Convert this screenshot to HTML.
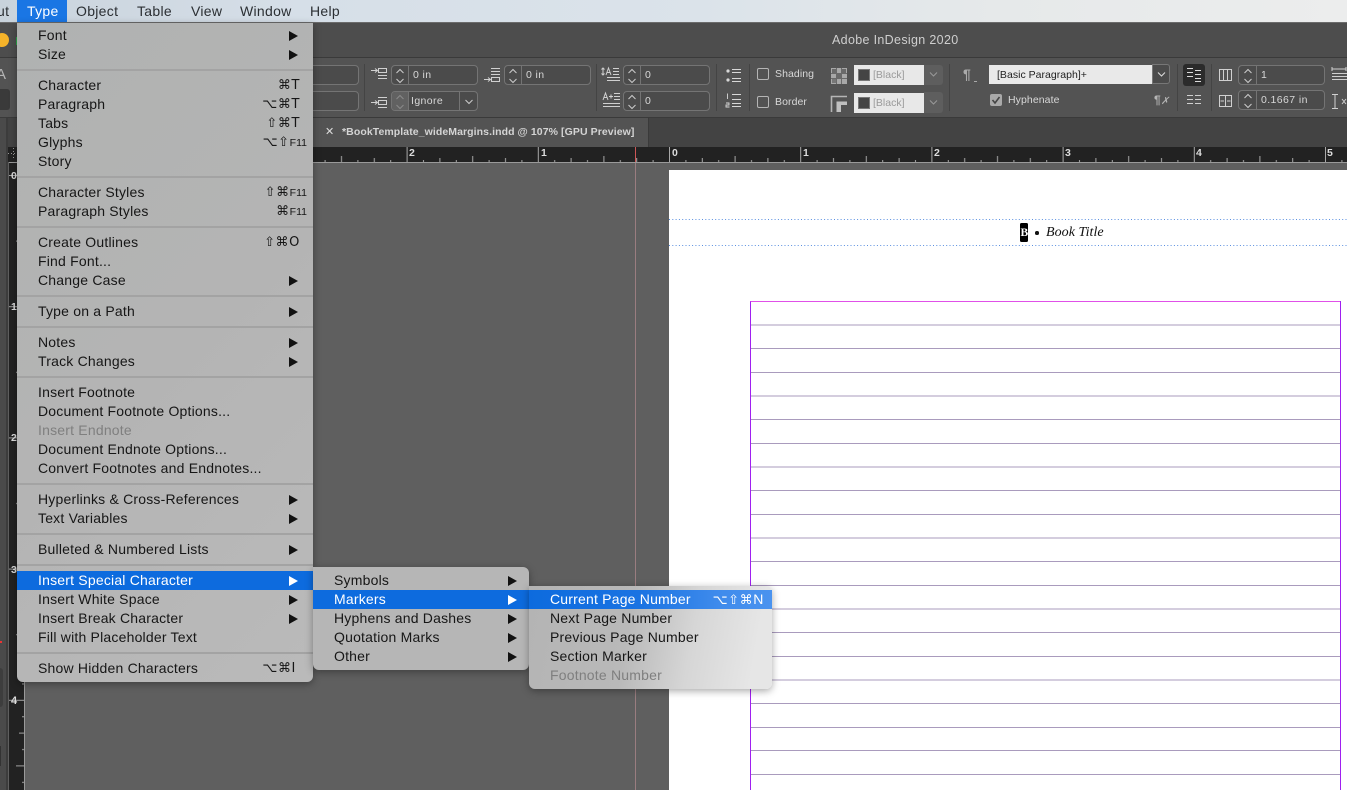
<!DOCTYPE html>
<html><head><meta charset="utf-8">
<style>
html,body{margin:0;padding:0}
body{width:1347px;height:790px;overflow:hidden;position:relative;background:#5f5f5f;font-family:"Liberation Sans",sans-serif}
.a{position:absolute}
.t{position:absolute;white-space:nowrap;line-height:16px}
/* top menu */
#bar{left:0;top:0;width:1347px;height:22px;background:linear-gradient(90deg,#c9d3dc 0,#d6dfe8 300px,#dbe3ea 700px,#e6e9ea 1000px,#eceded 1347px);border-bottom:1px solid #6b6b6b}
#bar .t{top:3px;font-size:14px;color:#2b2f33;letter-spacing:.3px}
/* toolbar */
.f{position:absolute;box-sizing:border-box;border:1px solid #747474;border-radius:4px;background:#4b4b4b;height:20px}
.f .d{position:absolute;left:16px;top:0;bottom:0;width:1px;background:#747474}
.f span{position:absolute;left:21px;top:2px;font-size:10.5px;line-height:14px;color:#d8d8d8;letter-spacing:.4px;white-space:nowrap}
.f svg{position:absolute;left:3px;top:2px}
.sep{position:absolute;width:1px;background:#444;top:64px;height:47px}
.lb{position:absolute;font-size:10.5px;color:#d8d8d8;line-height:14px;letter-spacing:.08px;white-space:nowrap}
.cb{position:absolute;box-sizing:border-box;width:12px;height:12px;border:1px solid #b5b5b5;border-radius:2px}
.rl{position:absolute;font-size:10.5px;font-weight:bold;color:#ddd;line-height:12px}
/* menus */
.m{position:absolute;box-shadow:0 2px 8px rgba(0,0,0,.35);color:#161616}
.m .i{position:absolute;left:0;right:0;height:19px;line-height:19px;font-size:14px;letter-spacing:.2px;white-space:nowrap;margin-top:1px}
.m .i b{font-weight:normal;position:absolute;left:21px;top:0}
.m .i u{text-decoration:none;position:absolute;top:0;right:13px;font-family:"DejaVu Sans",sans-serif;font-size:13px;letter-spacing:.6px;line-height:19px}
.m .i u small{font-family:"Liberation Sans",sans-serif;font-size:10.5px;letter-spacing:0}
.m .i i{position:absolute;right:15px;top:4.5px;width:0;height:0;border-left:9px solid #111;border-top:5px solid transparent;border-bottom:5px solid transparent}
.m .on{background:#0d6bde;color:#fff}
.m .on i{border-left-color:#fff}
.m .dis{color:#7f7f7f}
.m .s{position:absolute;left:0;right:0;height:2px;background:#a3a3a3}
</style></head><body>

<!-- app chrome -->
<div class="a" style="left:0;top:23px;width:1347px;height:35px;background:#4d4d4d"></div>
<div class="t" style="left:832px;top:32px;font-size:12.5px;color:#cfcfcf;letter-spacing:.33px">Adobe InDesign 2020</div>
<div class="a" style="left:-5px;top:33px;width:14px;height:14px;border-radius:50%;background:#f5b32a"></div>
<div class="a" style="left:16px;top:37px;width:6px;height:8px;background:#2ea84a"></div>
<div class="a" style="left:0;top:57px;width:1347px;height:1px;background:#3a3a3a"></div>
<div class="a" style="left:0;top:58px;width:1347px;height:59px;background:#535353"></div>
<div class="a" style="left:0;top:117px;width:1347px;height:1px;background:#3a3a3a"></div>
<div class="a" style="left:0;top:118px;width:1347px;height:29px;background:#434343"></div>
<div class="a" style="left:310px;top:118px;width:338px;height:29px;background:#535353;border-right:1px solid #3a3a3a"></div>
<div class="t" style="left:325px;top:124px;font-size:11px;color:#ddd">✕</div>
<div class="t" style="left:342px;top:124px;font-size:10.5px;font-weight:bold;color:#d4d4d4;letter-spacing:.08px">*BookTemplate_wideMargins.indd @ 107% [GPU Preview]</div>

<!-- left edge -->
<div class="a" style="left:0;top:118px;width:8px;height:672px;background:#4a4a4a"></div>
<div class="a" style="left:6px;top:118px;width:2px;height:672px;background:#3c3c3c"></div>
<div class="t" style="left:-4px;top:67px;font-size:15px;color:#b5b5b5">A</div>
<div class="a" style="left:-4px;top:89px;width:14px;height:21px;background:#3a3a3a;border-radius:3px"></div>
<div class="a" style="left:0;top:668px;width:3px;height:39px;background:#3d3d3d;border-radius:0 3px 3px 0"></div>
<div class="a" style="left:0;top:746px;width:1px;height:20px;background:#333"></div>
<div class="a" style="left:0;top:641px;width:2px;height:2px;background:#e33"></div>

<!-- rulers and page -->
<svg class="a" style="left:0;top:147px" width="1347" height="643" viewBox="0 147 1347 643">
<defs>
<pattern id="hr" patternUnits="userSpaceOnUse" x="669" y="147" width="131.2" height="15">
<path d="M.5 0V15M16.9 13V15M33.3 11V15M49.7 13V15M66.1 9V15M82.5 13V15M98.9 11V15M115.3 13V15" stroke="#a8a8a8" stroke-width="1" fill="none"/>
</pattern>
<pattern id="vr" patternUnits="userSpaceOnUse" x="8" y="175" width="16" height="131.2">
<path d="M0 .5H16M14 16.9H16M11 33.3H16M14 49.7H16M8 66.1H16M14 82.5H16M11 98.9H16M14 115.3H16" stroke="#a0a0a0" stroke-width="1" fill="none"/>
</pattern>
</defs>
<rect x="8" y="147" width="1339" height="15" fill="#222"/>
<rect x="25" y="147" width="1322" height="15" fill="url(#hr)"/>
<path d="M13.5 148V160M8 153.5H24" stroke="#999" stroke-dasharray="1 2" fill="none"/>
<rect x="9" y="162" width="16" height="1" fill="#9a9a9a"/>
<rect x="25" y="162" width="1322" height="1" fill="#9a9a9a"/>
<rect x="9" y="163" width="15" height="627" fill="#222"/>
<rect x="9" y="163" width="15" height="627" fill="url(#vr)"/>
<rect x="24" y="163" width="1" height="627" fill="#9a9a9a"/>
<rect x="25" y="163" width="1322" height="627" fill="#5f5f5f"/>
<rect x="635" y="163" width="1" height="627" fill="#9a7d80"/>
<rect x="635" y="147" width="1" height="15" fill="#c55"/>
<rect x="669" y="170" width="678" height="620" fill="#fff"/>
<path d="M669 219.5H1347M669 245.5H1347" stroke="#5a8fe0" stroke-width="1" stroke-dasharray="1 2.3" fill="none"/>
<path d="M750.5 325H1340M750.5 348.5H1340M750.5 372.5H1340M750.5 396H1340M750.5 419.5H1340M750.5 443.5H1340M750.5 467H1340M750.5 490.5H1340M750.5 514.5H1340M750.5 538H1340M750.5 561.5H1340M750.5 585.5H1340M750.5 609H1340M750.5 632.5H1340M750.5 656.5H1340M750.5 680H1340M750.5 703.5H1340M750.5 727.5H1340M750.5 750.5H1340M750.5 774.5H1340" stroke="#a99bbd" stroke-width="1" fill="none"/>
<path d="M750.5 790V301.5H1340.5V790" stroke="#a020f0" stroke-width="1" fill="none"/>
<path d="M750.5 301.5H1340" stroke="#e050e8" stroke-width="1" fill="none"/>
<rect x="1020" y="223" width="8" height="19" rx="1.5" fill="#000"/>
</svg>
<div class="t" style="left:1020.5px;top:225px;font:bold 11.5px/16px 'Liberation Serif',serif;color:#fff">B</div>
<div class="a" style="left:1035px;top:231px;width:3.5px;height:3.5px;border-radius:50%;background:#111"></div>
<div class="t" style="left:1046px;top:225px;font:italic 14px/16px 'Liberation Serif',serif;color:#111;letter-spacing:.05px">Book Title</div>

<div class="rl" style="left:409px;top:147px">2</div>
<div class="rl" style="left:541px;top:147px">1</div>
<div class="rl" style="left:672px;top:147px">0</div>
<div class="rl" style="left:803px;top:147px">1</div>
<div class="rl" style="left:934px;top:147px">2</div>
<div class="rl" style="left:1065px;top:147px">3</div>
<div class="rl" style="left:1196px;top:147px">4</div>
<div class="rl" style="left:1327px;top:147px">5</div>
<div class="rl" style="left:11px;top:170px">0</div>
<div class="rl" style="left:11px;top:301px">1</div>
<div class="rl" style="left:11px;top:432px">2</div>
<div class="rl" style="left:11px;top:564px">3</div>
<div class="rl" style="left:11px;top:695px;font-size:11px">4</div>

<!-- toolbar controls -->
<div class="f" style="left:300px;top:65px;width:59px"></div>
<div class="f" style="left:300px;top:91px;width:59px"></div>
<div class="sep" style="left:364px"></div><div class="sep" style="left:596px"></div><div class="sep" style="left:716px"></div><div class="sep" style="left:749px"></div><div class="sep" style="left:949px"></div><div class="sep" style="left:1177px"></div><div class="sep" style="left:1211px"></div>

<svg class="a" style="left:0;top:0" width="1347" height="120" fill="none" stroke="#d0d0d0" stroke-width="1">
<!-- indent icons -->
<path d="M371 70.5H377M375 68.5L377.5 70.5L375 72.5M378.5 68.5H386.5V72.5H378.5ZM378 75.5H387M378 78.5H387"/>
<path d="M484 79.5H490M488 77.5L490.5 79.5L488 81.5M491.5 77.5H499.5V81.5H491.5ZM491 74.5H500M491 71.5H500M491 68.5H500"/>
<path d="M371 102.5H377M375 100.5L377.5 102.5L375 104.5M378.5 100.5H386.5V104.5H378.5ZM378 97.5H387M378 107.5H387"/>
<!-- leading icons -->
<path d="M603 68V75M601.5 69.5L603 68L604.5 69.5M601.5 73.5L603 75L604.5 73.5M606 75L608.5 68L611 75M607 72.5H610M613 68.5H619M613 71.5H619M613 74.5H619M607 77.5H620M607 80.5H620"/>
<path d="M603 100L605.5 93L608 100M604 97.5H607M609 96.5H613M611 94.5V98.5M614 93.5H620M614 96.5H620M614 99.5H620M603 103.5H620M603 106.5H620"/>
<!-- list icons -->
<path d="M732 69.5H741M732 72.5H741M732 78.5H741M732 81.5H741" stroke="#d8d8d8"/>
<circle cx="728" cy="71" r="1.6" fill="#d8d8d8" stroke="none"/>
<circle cx="728" cy="80" r="1.6" fill="#d8d8d8" stroke="none"/>
<path d="M732 94.5H741M732 99.5H741M732 103.5H741M732 106.5H741" stroke="#d8d8d8"/>
<path d="M727.5 93.5V99M726 103H729V105H726V107H729.5" stroke="#d8d8d8" stroke-width=".9"/>
<!-- swatch icons -->
<rect x="831" y="68" width="16" height="16" fill="#a8a8a8" stroke="none"/>
<path d="M836.5 68V84M841.5 68V84M831 73.5H847M831 78.5H847" stroke="#6a6a6a"/>
<rect x="832" y="69" width="4" height="4" fill="#6a6a6a" stroke="none"/><rect x="842" y="69" width="4" height="4" fill="#6a6a6a" stroke="none"/><rect x="837" y="74" width="4" height="4" fill="#6a6a6a" stroke="none"/><rect x="832" y="79" width="4" height="4" fill="#777" stroke="none"/>
<path d="M831.5 112V96.5H847" stroke-width="1.6" stroke="#b5b5b5"/>
<path d="M836.5 112V101.5H847V105H841V112Z" fill="#c0c0c0" stroke="none"/>
<path d="M974 81.5H977" stroke="#aaa"/>
</svg>
<div class="t" style="left:963px;top:66px;font-size:14px;color:#aaa;font-weight:bold">¶</div>

<div class="f" style="left:391px;top:65px;width:87px"><div class="d"></div><span>0 in</span><svg width="10" height="16" fill="none" stroke="#ccc"><path d="M1.5 5L5 1.5L8.5 5M1.5 11L5 14.5L8.5 11"/></svg></div>
<div class="f" style="left:504px;top:65px;width:87px"><div class="d"></div><span>0 in</span><svg width="10" height="16" fill="none" stroke="#ccc"><path d="M1.5 5L5 1.5L8.5 5M1.5 11L5 14.5L8.5 11"/></svg></div>
<div class="f" style="left:391px;top:91px;width:87px"><div class="a" style="left:0;top:0;bottom:0;width:16px;background:#616161;border-radius:3px 0 0 3px"></div><div class="d"></div><span style="left:19px;color:#d8d8d8">Ignore</span><svg width="10" height="16" fill="none" stroke="#8a8a8a"><path d="M1.5 5L5 1.5L8.5 5M1.5 11L5 14.5L8.5 11"/></svg><div class="a" style="left:67px;top:0;bottom:0;width:1px;background:#747474"></div><svg style="left:72px;top:2px" width="10" height="16" fill="none" stroke="#ccc"><path d="M1.5 6L5 9.5L8.5 6"/></svg></div>
<div class="f" style="left:623px;top:65px;width:87px"><div class="d"></div><span>0</span><svg width="10" height="16" fill="none" stroke="#ccc"><path d="M1.5 5L5 1.5L8.5 5M1.5 11L5 14.5L8.5 11"/></svg></div>
<div class="f" style="left:623px;top:91px;width:87px"><div class="d"></div><span>0</span><svg width="10" height="16" fill="none" stroke="#ccc"><path d="M1.5 5L5 1.5L8.5 5M1.5 11L5 14.5L8.5 11"/></svg></div>

<div class="cb" style="left:757px;top:68px"></div>
<div class="lb" style="left:775px;top:67px">Shading</div>
<div class="cb" style="left:757px;top:96px"></div>
<div class="lb" style="left:775px;top:95px">Border</div>

<div class="a" style="left:854px;top:65px;width:70px;height:20px;background:#e8e8e8"></div>
<div class="a" style="left:858px;top:69px;width:12px;height:12px;background:#444;border:1px solid #777;box-sizing:border-box"></div>
<div class="t" style="left:873px;top:67px;font-size:10.5px;color:#9a9a9a">[Black]</div>
<div class="a" style="left:924px;top:65px;width:19px;height:20px;background:#5e5e5e;border-radius:0 3px 3px 0"></div>
<svg class="a" style="left:929px;top:71px" width="9" height="7" fill="none" stroke="#999"><path d="M1 1.5L4.5 5L8 1.5"/></svg>
<div class="a" style="left:854px;top:93px;width:70px;height:20px;background:#e8e8e8"></div>
<div class="a" style="left:858px;top:97px;width:12px;height:12px;background:#444;border:1px solid #777;box-sizing:border-box"></div>
<div class="t" style="left:873px;top:95px;font-size:10.5px;color:#9a9a9a">[Black]</div>
<div class="a" style="left:924px;top:92px;width:19px;height:21px;background:#5e5e5e;border-radius:0 3px 3px 0"></div>
<svg class="a" style="left:929px;top:99px" width="9" height="7" fill="none" stroke="#999"><path d="M1 1.5L4.5 5L8 1.5"/></svg>

<div class="a" style="left:989px;top:65px;width:163px;height:19px;background:#e9e9e9"></div>
<div class="t" style="left:997px;top:67px;font-size:10.5px;color:#222;letter-spacing:.02px">[Basic Paragraph]+</div>
<div class="a" style="left:1152px;top:64px;width:18px;height:20px;box-sizing:border-box;border:1px solid #777;border-radius:0 3px 3px 0;background:#4b4b4b"></div>
<svg class="a" style="left:1157px;top:71px" width="9" height="7" fill="none" stroke="#ddd"><path d="M1 1.5L4.5 5L8 1.5"/></svg>
<div class="a" style="left:990px;top:94px;width:12px;height:12px;border-radius:2px;background:#a9a9a9"></div>
<svg class="a" style="left:990px;top:94px" width="12" height="12" fill="none" stroke="#444" stroke-width="1.6"><path d="M2.5 6L5 9L9.5 3"/></svg>
<div class="lb" style="left:1008px;top:93px">Hyphenate</div>
<div class="t" style="left:1154px;top:92px;font-size:12px;font-weight:bold;color:#b5b5b5">¶<span style="font-size:10px;font-style:italic;font-weight:normal">✗</span></div>

<div class="a" style="left:1183px;top:64px;width:22px;height:22px;border-radius:3px;background:#2b2b2b"></div>
<svg class="a" style="left:0;top:0" width="1347" height="120" fill="none" stroke="#d0d0d0">
<path d="M1187 68.5H1193M1187 72.5H1193M1187 76.5H1193M1195 70.5H1201M1195 74.5H1201M1195 78.5H1201M1195 81.5H1201" stroke="#ddd"/>
<path d="M1187 95.5H1193M1187 99.5H1193M1187 103.5H1193M1195 95.5H1201M1195 99.5H1201M1195 103.5H1201"/>
<path d="M1219.5 69.5H1231.5V80.5H1219.5ZM1223.5 69.5V80.5M1227.5 69.5V80.5"/>
<path d="M1219.5 95.5H1231.5V106.5H1219.5ZM1225.5 95.5V106.5M1220.5 101H1224M1227 101H1230.5"/>
<path d="M1332 69H1346M1332 67V71M1346 67V71M1332 73.5H1347M1332 76.5H1347M1332 79.5H1347"/>
<path d="M1332 94.5H1338M1332 108.5H1338M1335 94.5V108.5M1342 99L1346 104M1346 99L1342 104"/>
</svg>
<div class="f" style="left:1238px;top:65px;width:87px"><div class="a" style="left:17px;top:0;bottom:0;width:1px;background:#747474"></div><span style="left:22px">1</span><svg width="10" height="16" fill="none" stroke="#ccc" style="left:4px"><path d="M1.5 5L5 1.5L8.5 5M1.5 11L5 14.5L8.5 11"/></svg></div>
<div class="f" style="left:1238px;top:90px;width:87px"><div class="a" style="left:17px;top:0;bottom:0;width:1px;background:#747474"></div><span style="left:22px">0.1667 in</span><svg width="10" height="16" fill="none" stroke="#ccc" style="left:4px"><path d="M1.5 5L5 1.5L8.5 5M1.5 11L5 14.5L8.5 11"/></svg></div>

<!-- menu bar -->
<div class="a" id="bar">
<div class="t" style="left:-3px">ut</div>
<div class="a" style="left:17px;top:0;width:50px;height:22px;background:#1a76e4"></div>
<div class="t" style="left:27px;color:#fff">Type</div>
<div class="t" style="left:76px">Object</div>
<div class="t" style="left:137px">Table</div>
<div class="t" style="left:191px">View</div>
<div class="t" style="left:240px">Window</div>
<div class="t" style="left:310px">Help</div>
</div>

<!-- Type menu -->
<div class="m" style="left:17px;top:23px;width:296px;height:659px;border-radius:0 0 6px 6px;background:linear-gradient(135deg,#b0b2b1 0,#b4b4b4 50%,#bababa 100%)">
<div class="i" style="top:2px"><b>Font</b><i></i></div>
<div class="i" style="top:21px"><b>Size</b><i></i></div>
<div class="s" style="top:46px"></div>
<div class="i" style="top:52px"><b>Character</b><u>⌘T</u></div>
<div class="i" style="top:71px"><b>Paragraph</b><u>⌥⌘T</u></div>
<div class="i" style="top:90px"><b>Tabs</b><u>⇧⌘T</u></div>
<div class="i" style="top:109px"><b>Glyphs</b><u style="right:6px">⌥⇧<small>F11</small></u></div>
<div class="i" style="top:128px"><b>Story</b></div>
<div class="s" style="top:153px"></div>
<div class="i" style="top:159px"><b>Character Styles</b><u style="right:6px">⇧⌘<small>F11</small></u></div>
<div class="i" style="top:178px"><b>Paragraph Styles</b><u style="right:6px">⌘<small>F11</small></u></div>
<div class="s" style="top:203px"></div>
<div class="i" style="top:209px"><b>Create Outlines</b><u>⇧⌘O</u></div>
<div class="i" style="top:228px"><b>Find Font...</b></div>
<div class="i" style="top:247px"><b>Change Case</b><i></i></div>
<div class="s" style="top:272px"></div>
<div class="i" style="top:278px"><b>Type on a Path</b><i></i></div>
<div class="s" style="top:303px"></div>
<div class="i" style="top:309px"><b>Notes</b><i></i></div>
<div class="i" style="top:328px"><b>Track Changes</b><i></i></div>
<div class="s" style="top:353px"></div>
<div class="i" style="top:359px"><b>Insert Footnote</b></div>
<div class="i" style="top:378px"><b>Document Footnote Options...</b></div>
<div class="i dis" style="top:397px"><b>Insert Endnote</b></div>
<div class="i" style="top:416px"><b>Document Endnote Options...</b></div>
<div class="i" style="top:435px"><b>Convert Footnotes and Endnotes...</b></div>
<div class="s" style="top:460px"></div>
<div class="i" style="top:466px"><b>Hyperlinks &amp; Cross-References</b><i></i></div>
<div class="i" style="top:485px"><b>Text Variables</b><i></i></div>
<div class="s" style="top:510px"></div>
<div class="i" style="top:516px"><b>Bulleted &amp; Numbered Lists</b><i></i></div>
<div class="s" style="top:541px"></div>
<div class="i on" style="top:547px"><b>Insert Special Character</b><i></i></div>
<div class="i" style="top:566px"><b>Insert White Space</b><i></i></div>
<div class="i" style="top:585px"><b>Insert Break Character</b><i></i></div>
<div class="i" style="top:604px"><b>Fill with Placeholder Text</b></div>
<div class="s" style="top:629px"></div>
<div class="i" style="top:635px"><b>Show Hidden Characters</b><u style="right:17px">⌥⌘I</u></div>
</div>

<!-- submenu -->
<div class="m" style="left:313px;top:567px;width:216px;height:103px;border-radius:0 6px 6px 6px;background:#b6b6b6">
<div class="i" style="top:3px"><b>Symbols</b><i style="right:12px"></i></div>
<div class="i on" style="top:22px"><b>Markers</b><i style="right:12px"></i></div>
<div class="i" style="top:41px"><b>Hyphens and Dashes</b><i style="right:12px"></i></div>
<div class="i" style="top:60px"><b>Quotation Marks</b><i style="right:12px"></i></div>
<div class="i" style="top:79px"><b>Other</b><i style="right:12px"></i></div>
</div>

<!-- sub-submenu -->
<div class="m" style="left:529px;top:586px;width:243px;height:103px;border-radius:0 6px 6px 6px;background:linear-gradient(100deg,#b4b4b4 0,#b9b9b9 105px,#d6d6d6 170px,#e6e6e6 235px)">
<div class="i on" style="top:3px;background:linear-gradient(90deg,#0d6bde 0,#1a73e2 110px,#3f8bec 190px,#4a93ef 100%)"><b>Current Page Number</b><u style="right:8px">⌥⇧⌘<span style="font-family:'Liberation Sans',sans-serif;font-size:14px">N</span></u></div>
<div class="i" style="top:22px"><b>Next Page Number</b></div>
<div class="i" style="top:41px"><b>Previous Page Number</b></div>
<div class="i" style="top:60px"><b>Section Marker</b></div>
<div class="i dis" style="top:79px"><b>Footnote Number</b></div>
</div>
</body></html>
